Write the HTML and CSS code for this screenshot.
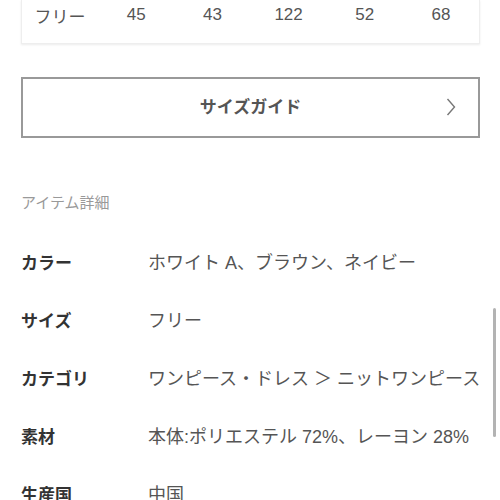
FILE: index.html
```html
<!DOCTYPE html>
<html lang="ja">
<head>
<meta charset="utf-8">
<link rel="stylesheet" href="styles.css">
</head>
<body>
<div class="page">
  <div class="size-card">
    <div class="size-row">
      <span>フリー</span><span>45</span><span>43</span><span>122</span><span>52</span><span>68</span>
    </div>
  </div>
  <button class="guide-btn">
    <span class="guide-label">サイズガイド</span>
    <svg class="chev" width="10" height="18" viewBox="0 0 10 18"><path d="M1.5 1 L8.5 9 L1.5 17" fill="none" stroke="#777" stroke-width="1.4"/></svg>
  </button>
  <div class="section-title">アイテム詳細</div>
  <dl class="details">
    <div class="drow"><dt>カラー</dt><dd>ホワイト A、ブラウン、ネイビー</dd></div>
    <div class="drow"><dt>サイズ</dt><dd>フリー</dd></div>
    <div class="drow"><dt>カテゴリ</dt><dd>ワンピース・ドレス ＞ ニットワンピース</dd></div>
    <div class="drow"><dt>素材</dt><dd>本体:ポリエステル 72%、レーヨン 28%</dd></div>
    <div class="drow"><dt>生産国</dt><dd>中国</dd></div>
  </dl>
</div>
<div class="scrollbar"></div>
</body>
</html>
```
FILE: styles.css
```css
html, body { margin: 0; padding: 0; background: #fff; }
body {
  width: 500px; height: 500px; overflow: hidden; position: relative;
  font-family: "Liberation Sans", "Noto Sans CJK JP", sans-serif;
  color: #555;
}
.page { padding: 0 20px 0 21px; }
.size-card {
  background: #fff;
  border: 1px solid #eee;
  border-top: none;
  box-shadow: 0 1px 2px rgba(0,0,0,0.08);
  padding-bottom: 13px;
}
.size-row {
  display: grid;
  grid-template-columns: repeat(6, 1fr);
  height: 30px;
  align-items: center;
  font-size: 17px;
  color: #555;
}
.size-row span { text-align: center; }
.guide-btn {
  margin-top: 33px;
  width: 100%;
  height: 61px;
  border: 2px solid #999;
  background: #fff;
  display: flex;
  align-items: center;
  justify-content: center;
  position: relative;
  font-family: inherit;
  padding: 0 0 4px;
}
.guide-label {
  font-size: 17px; font-weight: bold; color: #555;
  font-family: "Noto Sans CJK JP", sans-serif;
}
.chev { position: absolute; right: 22px; top: 19px; }
.section-title {
  margin-top: 54px;
  font-size: 15px; line-height: 20px; color: #999;
  font-family: "Noto Sans CJK JP", sans-serif;
}
.details { margin: 20px 0 0; }
.drow { display: flex; height: 58px; align-items: center; }
.drow dt {
  width: 127px; flex: none;
  font-size: 17px; font-weight: bold; color: #333;
  font-family: "Noto Sans CJK JP", sans-serif;
}
.drow dd { margin: 0; font-size: 18px; color: #555; white-space: nowrap; }
.scrollbar {
  position: absolute; left: 493px; top: 308px;
  width: 3px; height: 129px; border-radius: 2px; background: #b3b3b3;
}
```
